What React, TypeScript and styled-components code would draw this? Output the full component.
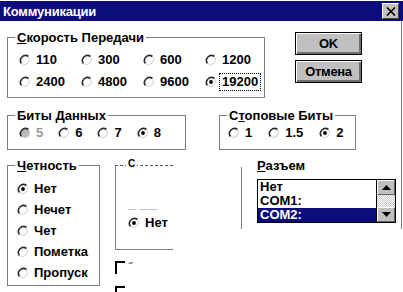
import React from "react";
import styled, { createGlobalStyle } from "styled-components";

const GlobalStyle = createGlobalStyle`
  html, body {
    margin: 0;
    padding: 0;
    background: #ffffff;
  }
  body {
    font-family: "Liberation Sans", Arial, sans-serif;
    font-weight: bold;
    font-size: 13px;
    color: #000000;
    overflow: hidden;
  }
`;

const NAVY = "#0c0c7c";
const LINE = "#7c7c7c";
const FACE = "#c0c0c0";

function RadioMark({ checked, disabled }: { checked?: boolean; disabled?: boolean }) {
  return (
    <svg width="12" height="12" viewBox="0 0 12 12" style={{ flex: "none" }}>
      {disabled && <circle cx="6" cy="6" r="5" fill="#b8b8b8" />}
      <path d="M9.5 2.5 A5 5 0 0 0 2.5 9.5" fill="none" stroke="#2a2a2a" strokeWidth="1.6" />
      <path d="M2.5 9.5 A5 5 0 0 0 9.5 2.5" fill="none" stroke="#d0d0d0" strokeWidth="1" />
      {checked && <circle cx="6" cy="6" r="1.9" fill="#000" />}
    </svg>
  );
}

interface RadioProps {
  label: string;
  checked?: boolean;
  disabled?: boolean;
  focused?: boolean;
}

function Radio({ label, checked, disabled, focused }: RadioProps) {
  return (
    <RadioItem>
      <RadioMark checked={checked} disabled={disabled} />
      <RadioText $disabled={disabled} $focused={focused}>
        {label}
      </RadioText>
    </RadioItem>
  );
}

const speeds = ["110", "300", "600", "1200", "2400", "4800", "9600", "19200"];
const parity = ["Нет", "Нечет", "Чет", "Пометка", "Пропуск"];

export default function App() {
  return (
    <Window>
      <GlobalStyle />
      <TitleBar>
        <TitleText>Коммуникации</TitleText>
        <CloseBox>
          <svg width="10" height="9" viewBox="0 0 10 9">
            <path d="M1 0.5 L9 8.5 M9 0.5 L1 8.5" stroke="#000" strokeWidth="1.6" />
          </svg>
        </CloseBox>
      </TitleBar>

      <Body>
        <Content>
          <TopRow>
            <Group $width={258}>
              <Legend>
                <u>С</u>корость Передачи
              </Legend>
              <SpeedGrid>
                {speeds.map((s) => (
                  <Radio key={s} label={s} checked={s === "19200"} focused={s === "19200"} />
                ))}
              </SpeedGrid>
            </Group>
            <Buttons>
              <Button>OK</Button>
              <Button>Отмена</Button>
            </Buttons>
          </TopRow>

          <MidRow>
            <Group $width={179}>
              <Legend>
                Биты <u>Д</u>анных
              </Legend>
              <InlineRadios $gap={14} $pad={11}>
                <Radio label="5" disabled />
                <Radio label="6" />
                <Radio label="7" />
                <Radio label="8" checked />
              </InlineRadios>
            </Group>
            <StopGroup $width={137}>
              <Legend>
                С<u>т</u>оповые Биты
              </Legend>
              <InlineRadios $gap={15} $pad={8}>
                <Radio label="1" />
                <Radio label="1.5" />
                <Radio label="2" checked />
              </InlineRadios>
            </StopGroup>
          </MidRow>

          <BottomRow>
            <Group $width={93}>
              <Legend>
                <u>Ч</u>етность
              </Legend>
              <ParityList>
                {parity.map((p) => (
                  <Radio key={p} label={p} checked={p === "Нет"} />
                ))}
              </ParityList>
            </Group>

            <GhostColumn>
              <GhostGroup>
                <GhostLegend>С</GhostLegend>
                <GhostFaint>— ——</GhostFaint>
                <Radio label="Нет" checked />
              </GhostGroup>
              <CheckRow>
                <CheckCorner />
                <CheckMark>˝</CheckMark>
              </CheckRow>
              <CheckCorner />
            </GhostColumn>

            <GhostDivider />

            <Connector>
              <ConnectorLabel>
                <u>Р</u>азъем
              </ConnectorLabel>
              <ListBox>
                <ListItems>
                  <ListItem>Нет</ListItem>
                  <ListItem>COM1:</ListItem>
                  <ListItem $selected>COM2:</ListItem>
                </ListItems>
                <ScrollBar>
                  <ScrollButton>
                    <svg width="9" height="5" viewBox="0 0 9 5">
                      <path d="M4.5 0 L9 5 L0 5 Z" fill="#000" />
                    </svg>
                  </ScrollButton>
                  <ScrollTrack />
                  <ScrollButton>
                    <svg width="9" height="5" viewBox="0 0 9 5">
                      <path d="M0 0 L9 0 L4.5 5 Z" fill="#000" />
                    </svg>
                  </ScrollButton>
                </ScrollBar>
              </ListBox>
            </Connector>
          </BottomRow>
        </Content>
        <WindowEdge />
      </Body>
    </Window>
  );
}

const Window = styled.div`
  width: 403px;
  height: 292px;
  background: #ffffff;
  overflow: hidden;
`;

const TitleBar = styled.div`
  margin-top: 1px;
  height: 20px;
  background: ${NAVY};
  display: flex;
  align-items: center;
  padding-left: 3px;
`;

const TitleText = styled.div`
  color: #ffffff;
  font-size: 13px;
  letter-spacing: -0.2px;
`;

const CloseBox = styled.div`
  margin-left: auto;
  margin-right: 4px;
  width: 15px;
  height: 14px;
  background: ${FACE};
  border: 1px solid #ffffff;
  border-right-color: #404040;
  border-bottom-color: #404040;
  display: flex;
  align-items: center;
  justify-content: center;
`;

const Body = styled.div`
  display: flex;
`;

const Content = styled.div`
  width: 394px;
  padding-left: 7px;
  display: flex;
  flex-direction: column;
`;

const WindowEdge = styled.div`
  width: 1px;
  height: 208px;
  background: ${LINE};
`;

const TopRow = styled.div`
  display: flex;
  align-items: flex-start;
  margin-top: 9px;
`;

const MidRow = styled.div`
  display: flex;
  margin-top: 10px;
`;

const BottomRow = styled.div`
  display: flex;
  align-items: flex-start;
  margin-top: 8px;
`;

const Group = styled.fieldset<{ $width: number }>`
  margin: 0;
  padding: 0;
  min-width: 0;
  width: ${(p) => p.$width}px;
  box-sizing: border-box;
  border: 1px solid ${LINE};
`;

const StopGroup = styled(Group)`
  margin-left: 33px;
`;

const Legend = styled.legend`
  margin-left: 7px;
  padding: 0 2px;
  height: 15px;
  line-height: 15px;
  font-size: 13px;

  u {
    text-decoration-thickness: 1px;
  }
`;

const RadioItem = styled.div`
  display: flex;
  align-items: center;
  gap: 5px;
  height: 14px;
  white-space: nowrap;
`;

const RadioText = styled.span<{ $disabled?: boolean; $focused?: boolean }>`
  color: ${(p) => (p.$disabled ? "#9a9a9a" : "#000")};
  line-height: 14px;
  padding: 0 1px;
  margin-left: -1px;
  outline: ${(p) => (p.$focused ? "1px dotted #000" : "none")};
  outline-offset: 1px;
`;

const SpeedGrid = styled.div`
  display: grid;
  grid-template-columns: repeat(4, 62px);
  row-gap: 8px;
  padding: 8px 0 8px 11px;
`;

const InlineRadios = styled.div<{ $gap: number; $pad: number }>`
  display: flex;
  gap: ${(p) => p.$gap}px;
  padding: 3px 0 9px ${(p) => p.$pad}px;
`;

const ParityList = styled.div`
  display: flex;
  flex-direction: column;
  gap: 7px;
  padding: 9px 0 5px 9px;
`;

const Buttons = styled.div`
  display: flex;
  flex-direction: column;
  gap: 5px;
  margin-left: 30px;
  margin-top: 2px;
`;

const Button = styled.div`
  width: 67px;
  height: 23px;
  box-sizing: border-box;
  background: ${FACE};
  border: 1px solid #000;
  box-shadow: inset 1px 1px 0 #ffffff, inset -2px -2px 0 #707070;
  display: flex;
  align-items: center;
  justify-content: center;
  font-size: 13px;
  letter-spacing: -0.3px;
`;

const GhostColumn = styled.div`
  display: flex;
  flex-direction: column;
  margin-left: 15px;
`;

const GhostGroup = styled.div`
  margin-top: 7px;
  width: 58px;
  height: 85px;
  box-sizing: border-box;
  border-left: 1px solid ${LINE};
  border-bottom: 1px solid ${LINE};
  border-top: 1px dashed #555;
  display: flex;
  flex-direction: column;
  padding-left: 12px;
  position: relative;
`;

const GhostLegend = styled.span`
  position: absolute;
  top: -8px;
  left: 10px;
  background: #fff;
  padding: 0 2px;
  font-size: 10px;
  line-height: 12px;
`;

const GhostFaint = styled.div`
  margin-top: 38px;
  height: 12px;
  font-size: 8px;
  color: #b0b0b0;
  letter-spacing: 1px;
`;

const CheckRow = styled.div`
  display: flex;
  align-items: flex-start;
  gap: 4px;
  margin-top: 11px;
`;

const CheckCorner = styled.div`
  width: 10px;
  height: 13px;
  margin-bottom: 12px;
  border-top: 2px solid #000;
  border-left: 2px solid #000;
  box-sizing: border-box;
`;

const CheckMark = styled.span`
  font-size: 11px;
  line-height: 10px;
  color: #444;
`;

const GhostDivider = styled.div`
  width: 1px;
  height: 62px;
  margin-top: 9px;
  margin-left: 68px;
  background: ${LINE};
`;

const Connector = styled.div`
  display: flex;
  flex-direction: column;
  margin-left: 15px;
`;

const ConnectorLabel = styled.div`
  height: 15px;
  line-height: 15px;
  margin-bottom: 6px;
`;

const ListBox = styled.div`
  width: 139px;
  height: 44px;
  box-sizing: border-box;
  border: 1px solid #000;
  display: flex;
`;

const ListItems = styled.div`
  flex: 1;
  display: flex;
  flex-direction: column;
`;

const ListItem = styled.div<{ $selected?: boolean }>`
  height: 14px;
  line-height: 14px;
  padding-left: 2px;
  font-size: 13px;
  background: ${(p) => (p.$selected ? NAVY : "transparent")};
  color: ${(p) => (p.$selected ? "#ffffff" : "#000")};
`;

const ScrollBar = styled.div`
  width: 18px;
  display: flex;
  flex-direction: column;
  border-left: 1px solid #000;
`;

const ScrollButton = styled.div`
  height: 15px;
  box-sizing: border-box;
  background: ${FACE};
  border: 1px solid #ffffff;
  border-right-color: #606060;
  border-bottom-color: #606060;
  display: flex;
  align-items: center;
  justify-content: center;
`;

const ScrollTrack = styled.div`
  flex: 1;
  background: repeating-conic-gradient(#c8c8c8 0 25%, #ffffff 0 50%) 0 0 / 2px 2px;
`;
